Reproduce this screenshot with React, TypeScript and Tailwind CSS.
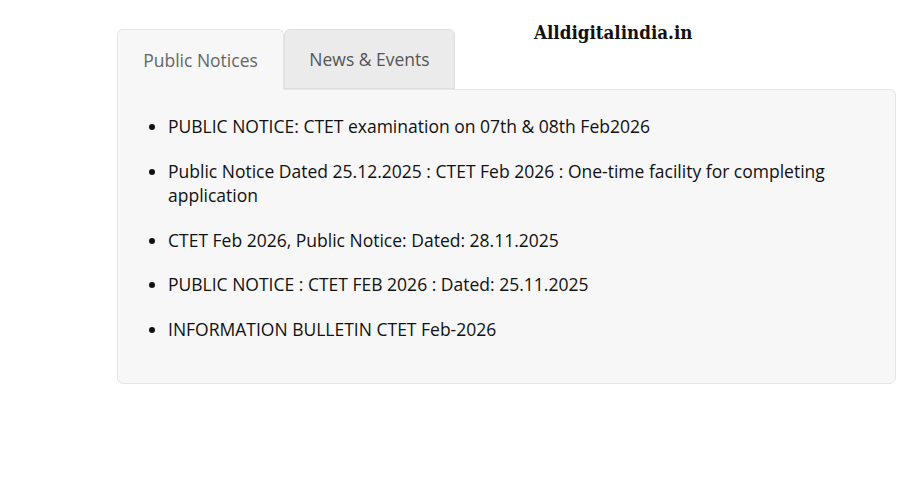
import React from "react";

const items = [
  "PUBLIC NOTICE: CTET examination on 07th & 08th Feb2026",
  "Public Notice Dated 25.12.2025 : CTET Feb 2026 : One-time facility for completing application",
  "CTET Feb 2026, Public Notice: Dated: 28.11.2025",
  "PUBLIC NOTICE : CTET FEB 2026 : Dated: 25.11.2025",
  "INFORMATION BULLETIN CTET Feb-2026",
];

export default function App() {
  return (
    <div className="relative w-[917px] h-[496px] bg-white" style={{ fontFamily: '"Open Sans", sans-serif' }}>
      <div
        className="absolute left-[534px] top-[20px] text-[18.6px] font-bold text-[#111] leading-[26px]"
        style={{ fontFamily: '"DejaVu Serif Condensed", "DejaVu Serif", serif' }}
      >
        Alldigitalindia.in
      </div>
      <div className="pt-[29px] pl-[117px] pr-[21px]">
        <div className="flex">
          <div className="relative z-10 -mb-px w-[167px] h-[61px] flex items-center justify-center rounded-t-[6px] border border-b-0 border-[#e6e6e6] bg-[#f7f7f7] text-[17.5px] text-[#666]">
            Public Notices
          </div>
          <div className="w-[171px] h-[60px] flex items-center justify-center rounded-t-[6px] border border-[#dedede] bg-[#ebebeb] text-[17.5px] text-[#555]">
            News & Events
          </div>
        </div>
        <div className="h-[295px] rounded-b-[6px] rounded-tr-[6px] border border-[#e6e6e6] bg-[#f7f7f7] pt-[24px] pl-[50px] pr-[40px]">
          <ul className="list-disc text-[17.5px] leading-[24px] text-[#111]">
            {items.map((t) => (
              <li key={t} className="mb-[20.8px]">
                {t}
              </li>
            ))}
          </ul>
        </div>
      </div>
    </div>
  );
}
